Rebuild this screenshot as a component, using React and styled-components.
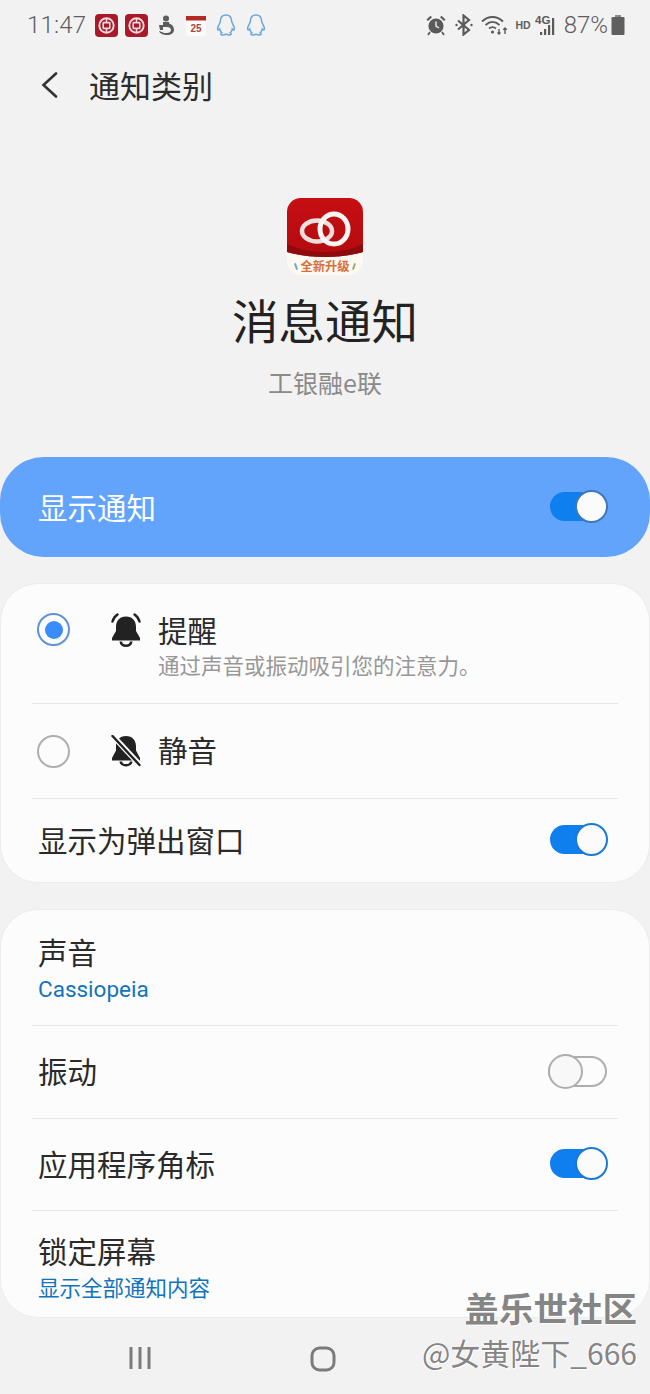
import React from "react";
import styled, { createGlobalStyle } from "styled-components";

const CJK = '"Noto Sans CJK SC", "Noto Sans", sans-serif';

const Global = createGlobalStyle`
  html, body { margin: 0; padding: 0; background: #f2f2f2; }
  * { box-sizing: border-box; }
`;

const Screen = styled.div`
  position: relative;
  width: 650px;
  height: 1394px;
  overflow: hidden;
  background: #f2f2f2;
  font-family: ${CJK};
  color: #252525;
  display: flex;
  flex-direction: column;
`;

const StatusBar = styled.div`
  height: 50px;
  padding: 0 25px 0 27px;
  display: flex;
  align-items: center;
  justify-content: space-between;
  color: #5e5e5e;
`;
const StatusGroup = styled.div`
  display: flex;
  align-items: center;
  gap: ${(p) => p.$gap || 6}px;
`;
const Clock = styled.span`
  font-family: Roboto, sans-serif;
  font-size: 24px;
  font-weight: 300;
  letter-spacing: 0.2px;
  margin-right: -1px;
`;
const Percent = styled.span`
  font-family: Roboto, sans-serif;
  font-size: 24px;
  font-weight: 300;
  margin-left: 0;
  margin-right: -4px;
`;
const HdLabel = styled.span`
  font-family: "Liberation Sans", sans-serif;
  font-size: 10.5px;
  font-weight: 700;
  margin-right: -3px;
`;

const Header = styled.header`
  height: 72px;
  padding: 0 0 2px 41px;
  display: flex;
  align-items: center;
  gap: 30px;
`;
const HeaderTitle = styled.h1`
  margin: 0 0 2px;
  font-size: 31px;
  font-weight: 400;
  line-height: 1;
  color: #2c2c2c;
`;

const Hero = styled.section`
  display: flex;
  flex-direction: column;
  align-items: center;
  padding-top: 76px;
  height: 335px;
`;
const AppIcon = styled.div`
  width: 76px;
  height: 77px;
  border-radius: 14px;
  overflow: hidden;
  background: #fdf8f2;
  display: flex;
  flex-direction: column;
  align-items: center;
`;
const AppIconArt = styled.svg`
  display: block;
  flex: none;
`;
const AppIconLabel = styled.span`
  font-size: 12.3px;
  line-height: 17px;
  font-weight: 700;
  color: #d8703a;
  white-space: nowrap;
  display: flex;
  align-items: center;
  gap: 3px;
  &::before,
  &::after {
    content: "";
    width: 2px;
    height: 7px;
    border-radius: 1px;
    background: #6fa8c9;
    transform: rotate(-20deg);
  }
  &::after {
    background: #8fb56a;
    transform: rotate(20deg);
  }
`;
const HeroTitle = styled.h2`
  margin: 14px 0 0;
  font-size: 46.5px;
  line-height: 60px;
  font-weight: 400;
  color: #222;
`;
const HeroSub = styled.div`
  margin-top: 17px;
  font-size: 25px;
  line-height: 32px;
  color: #8a8a8a;
`;

const Banner = styled.div`
  height: 100px;
  border-radius: 44px;
  background: #62a3fb;
  padding: 0 43px 0 38px;
  display: flex;
  align-items: center;
  justify-content: space-between;
  font-size: 29.5px;
  color: #fff;
  flex: none;
`;
const BannerText = styled.span`
  margin-bottom: 3px;
`;

const Card = styled.section`
  margin-top: 26px;
  background: #fcfcfc;
  border: 1px solid #ececec;
  border-radius: 38px;
  padding: 0 31px;
  flex: none;
`;
const Row = styled.div`
  height: ${(p) => p.$h}px;
  padding: ${(p) => p.$pt || 0}px 11px 0 6px;
  display: flex;
  align-items: center;
  justify-content: space-between;
  border-top: ${(p) => (p.$first ? "none" : "1px solid #e6e6e6")};
`;
const OptionRow = styled(Row)`
  justify-content: flex-start;
  align-items: ${(p) => (p.$top ? "flex-start" : "center")};
  padding-top: ${(p) => (p.$top ? "29px" : "0")};
  padding-left: 5px;
`;
const RowText = styled.div`
  display: flex;
  flex-direction: column;
`;
const OptionText = styled(RowText)`
  margin-top: -4px;
  margin-left: 1px;
`;
const Label = styled.div`
  font-size: 29.5px;
  line-height: 40px;
  color: #2a2a2a;
`;
const InlineLabel = styled(Label)`
  margin-bottom: 4px;
  margin-left: ${(p) => p.$indent || 0}px;
`;
const Hint = styled.div`
  font-size: 21.5px;
  line-height: 28px;
  color: #979797;
  margin-top: 2px;
  white-space: nowrap;
`;
const LinkValue = styled.div`
  font-family: ${(p) => (p.$latin ? "Roboto, sans-serif" : CJK)};
  font-size: ${(p) => (p.$latin ? 22.5 : 21.5)}px;
  line-height: 30px;
  color: #1273bd;
  margin-top: ${(p) => (p.$latin ? 3 : 2)}px;
`;
const Radio = styled.div`
  width: 33px;
  height: 33px;
  flex: none;
  border-radius: 50%;
  border: 2px solid ${(p) => (p.$on ? "#5f92da" : "#aeaeae")};
  display: flex;
  align-items: center;
  justify-content: center;
  &::after {
    content: "";
    display: ${(p) => (p.$on ? "block" : "none")};
    width: 18px;
    height: 18px;
    border-radius: 50%;
    background: #3a8bfb;
  }
`;
const BellSlot = styled.div`
  margin-left: 39px;
  margin-right: 14px;
  width: 34px;
  flex: none;
  display: flex;
  justify-content: center;
`;

const Track = styled.div`
  width: ${(p) => (p.$on ? 57 : 59)}px;
  height: ${(p) => (p.$on ? 29 : 31)}px;
  margin-bottom: 2px;
  border-radius: 16px;
  flex: none;
  display: flex;
  align-items: center;
  justify-content: ${(p) => (p.$on ? "flex-end" : "flex-start")};
  background: ${(p) => (p.$on ? "#0f7ff0" : "transparent")};
  border: ${(p) => (p.$on ? "none" : "2px solid #aeaeae")};
`;
const Thumb = styled.div`
  width: ${(p) => (p.$on ? 33 : 35)}px;
  height: ${(p) => (p.$on ? 33 : 35)}px;
  flex: none;
  border-radius: 50%;
  margin: ${(p) => (p.$on ? "0 -1px 0 0" : "0 0 0 -2px")};
  background: ${(p) => (p.$on ? "#fbfbfb" : "#f8f8f8")};
  border: 2px solid ${(p) => (p.$on ? (p.$dark ? "#3f78b8" : "#1a78d8") : "#aeaeae")};
`;

const NavBar = styled.nav`
  margin-top: 28px;
  padding-left: 128px;
  display: flex;
  align-items: flex-start;
  gap: 158px;
  color: #7b7b7b;
`;

const Watermark = styled.div`
  position: absolute;
  right: 13px;
  bottom: 20px;
  text-align: right;
  color: #858585;
  text-shadow: 1px 1px 0 #fff, -1px 0 0 #fff;
`;
const WatermarkBrand = styled.div`
  font-size: 34.5px;
  font-weight: 700;
  line-height: 44px;
`;
const WatermarkUser = styled.div`
  font-size: 30px;
  line-height: 44px;
  margin-top: 1px;
  white-space: nowrap;
`;

const BankBadge = () => (
  <svg width="23" height="23" viewBox="0 0 23 23">
    <rect width="23" height="23" rx="4" fill="#a9192a" />
    <circle cx="11.5" cy="11.5" r="7.2" fill="none" stroke="#f3dcdc" strokeWidth="1.9" />
    <rect x="8.2" y="8.6" width="6.6" height="5.8" rx="0.6" fill="none" stroke="#f3dcdc" strokeWidth="1.6" />
    <path d="M11.5 4.5v4M11.500 14.500v4" stroke="#f3dcdc" strokeWidth="1.5" />
  </svg>
);

const ChatPenguin = () => (
  <svg width="20" height="24" viewBox="0 0 20 24" fill="none" stroke="#6aa7dc" strokeWidth="1.5">
    <path d="M10 2c3.800 0 5.600 3 5.700 6.500 0 1.200 2 3.600 2.600 6.400.4 2-.6 2.700-2 1.200 0 1.700-1 2.800-2 3.500 1.500.6 1.200 2.400-1 2.400-1.500 0-2.500-.5-3.300-.9-.6.4-1.800.9-3.300.9-2.200 0-2.500-1.800-1-2.400-1-.7-2-1.800-2-3.500-1.400 1.500-2.400.8-2-1.200.6-2.800 2.600-5.200 2.600-6.400C4.400 5 6.200 2 10 2Z" />
  </svg>
);

const SailorGlyph = () => (
  <svg width="18" height="21" viewBox="0 0 18 21" fill="#5c5c5c">
    <circle cx="8" cy="3.500" r="3" />
    <path d="M5 7h6l1 5H5z" />
    <path d="M9 9c4-1 7 2 7 6 0 3-3 5-7 5-3 0-7-1-8-4l3 1c1 1 3 1 5 1s4-1 4-3c0-2-2-3-4-3z" />
    <path d="M1 10h4v5H2z" />
  </svg>
);

const CalendarGlyph = () => (
  <svg width="20" height="21" viewBox="0 0 20 21">
    <rect y="1" width="20" height="20" fill="#fafafa" />
    <rect y="1" width="20" height="4.500" fill="#b32a22" />
    <text x="10" y="16.500" textAnchor="middle" fontFamily="Liberation Sans, sans-serif" fontSize="10" fontWeight="700" fill="#a5483f">25</text>
  </svg>
);

const AlarmGlyph = () => (
  <svg width="22" height="22" viewBox="0 0 22 22" fill="#5a5a5a">
    <circle cx="11" cy="12" r="7.600" />
    <path d="M11 7.500V12l3 2" stroke="#e8e8e8" strokeWidth="1.500" fill="none" />
    <path d="M1.500 5.500 5.500 1.800l1.500 1.500-4 3.700zM20.500 5.500 16.500 1.800 15 3.300l4 3.700z" />
    <path d="M5 18l-2 3M17 18l2 3" stroke="#5a5a5a" strokeWidth="1.800" />
  </svg>
);

const BluetoothGlyph = () => (
  <svg width="20" height="22" viewBox="0 0 20 22" fill="none" stroke="#5a5a5a" strokeWidth="2.200">
    <path d="M4 6.500 15 16l-5.500 4.500V1.500L15 6 4 15.500" />
    <circle cx="2.500" cy="11" r="1.200" fill="#5a5a5a" stroke="none" />
    <circle cx="17.500" cy="11" r="1.200" fill="#5a5a5a" stroke="none" />
  </svg>
);

const WifiGlyph = () => (
  <svg width="27" height="22" viewBox="0 0 27 22" fill="none" stroke="#5a5a5a" strokeWidth="1.800">
    <path d="M1 7.500C7 1.500 16 1.500 22 7.500" />
    <path d="M4.500 11c4.500-4 9.500-4 14 0" />
    <path d="M8 14.500c2.500-2 4.500-2 7 0" />
    <circle cx="11.500" cy="18" r="1.600" fill="#5a5a5a" stroke="none" />
    <path d="M18 15v5M16.500 18.500 18 20l1.500-1.500M24 20v-6M22.300 15.800 24 14l1.700 1.800" strokeWidth="1.400" />
  </svg>
);

const SignalGlyph = () => (
  <svg width="22" height="24" viewBox="0 0 22 24" fill="#5a5a5a">
    <text x="0" y="10.500" fontFamily="Liberation Sans, sans-serif" fontSize="11.500" fontWeight="700">4G</text>
    <rect x="5" y="19" width="2.200" height="3" />
    <rect x="9" y="16" width="2.200" height="6" />
    <rect x="13" y="12" width="2.200" height="10" />
    <rect x="17" y="5" width="2.200" height="17" />
  </svg>
);

const BatteryGlyph = () => (
  <svg width="14" height="20" viewBox="0 0 14 20">
    <rect x="4" y="0" width="6" height="3" fill="#8a8a8a" />
    <rect x="0.500" y="2" width="13" height="18" rx="1.200" fill="#5f5f5f" />
  </svg>
);

const BackChevron = () => (
  <svg width="18" height="26" viewBox="0 0 18 26" fill="none" stroke="#333" strokeWidth="2.600" strokeLinecap="round">
    <path d="M15 1.500 2.500 13 15 24.500" />
  </svg>
);

const RingBell = () => (
  <svg width="30" height="34" viewBox="0 0 30 34" fill="#222">
    <path d="M15 3.500c-6.500 0-10 4.500-10 10.500v4L1 25v2.500h28V25l-4-7v-4c0-6-3.500-10.500-10-10.500Z" />
    <path d="M8.500 28.500a6.500 5.500 0 0 0 13 0h-2.600a3.900 3 0 0 1-7.800 0Z" />
    <path d="M1.500 8.500c.8-3 2.400-5.200 5-7M28.500 8.500c-.8-3-2.400-5.200-5-7" fill="none" stroke="#222" strokeWidth="2.400" strokeLinecap="round" />
  </svg>
);

const MutedBell = () => (
  <svg width="30" height="32" viewBox="0 0 30 32" fill="#222">
    <path d="M15 1c-6.500 0-10 4.500-10 10.500v4L1 23v2.500h28V23l-4-7.500v-4C25 5.500 21.500 1 15 1Z" />
    <path d="M8.500 26.500a6.500 5 0 0 0 13 0h-2.600a3.900 2.600 0 0 1-7.800 0Z" />
    <path d="M1 0 29 30" stroke="#fcfcfc" strokeWidth="5.500" />
    <path d="M1.500 1 28.500 30" stroke="#222" strokeWidth="2.400" strokeLinecap="round" />
  </svg>
);

const RecentsIcon = () => (
  <svg width="24" height="24" viewBox="0 0 24 24" fill="none" stroke="currentColor" strokeWidth="3">
    <path d="M3 1v22M12 1v22M21 1v22" />
  </svg>
);

const HomeIcon = () => (
  <svg width="26" height="26" viewBox="0 0 26 26" fill="none" stroke="currentColor" strokeWidth="3">
    <rect x="2" y="2" width="22" height="22" rx="7.500" />
  </svg>
);

const Switch = ({ on, dark }) => (
  <Track $on={on}>
    <Thumb $on={on} $dark={dark} />
  </Track>
);

export default function App() {
  return (
    <Screen>
      <Global />
      <StatusBar>
        <StatusGroup $gap={10}>
          <Clock>11:47</Clock>
          <StatusGroup $gap={7}>
            <BankBadge />
            <BankBadge />
          </StatusGroup>
          <SailorGlyph />
          <CalendarGlyph />
          <ChatPenguin />
          <ChatPenguin />
        </StatusGroup>
        <StatusGroup $gap={7}>
          <AlarmGlyph />
          <BluetoothGlyph />
          <WifiGlyph />
          <HdLabel>HD</HdLabel>
          <SignalGlyph />
          <Percent>87%</Percent>
          <BatteryGlyph />
        </StatusGroup>
      </StatusBar>

      <Header>
        <BackChevron />
        <HeaderTitle>通知类别</HeaderTitle>
      </Header>

      <Hero>
        <AppIcon>
          <AppIconArt width="76" height="60" viewBox="0 0 76 60">
            <defs>
              <linearGradient id="iconRed" x1="0" y1="0" x2="0" y2="1">
                <stop offset="0" stopColor="#c70e13" />
                <stop offset="1" stopColor="#b30b0f" />
              </linearGradient>
            </defs>
            <path d="M0 0h76v54c-10 3-24 5-38 5S10 57 0 54Z" fill="url(#iconRed)" />
            <path d="M0 46c10 5 24 8 38 8s28-3 38-8v8c-10 3-24 5-38 5S10 57 0 54Z" fill="#8f0a0d" />
            <ellipse cx="30" cy="33" rx="15" ry="10.500" fill="none" stroke="#eadfdc" strokeWidth="4.500" />
            <ellipse cx="47" cy="31" rx="14" ry="15" fill="none" stroke="#fbf6f3" strokeWidth="5" />
          </AppIconArt>
          <AppIconLabel>全新升级</AppIconLabel>
        </AppIcon>
        <HeroTitle>消息通知</HeroTitle>
        <HeroSub>工银融e联</HeroSub>
      </Hero>

      <Banner>
        <BannerText>显示通知</BannerText>
        <Switch on dark />
      </Banner>

      <Card>
        <OptionRow $first $h={119} $top>
          <Radio $on />
          <BellSlot>
            <RingBell />
          </BellSlot>
          <OptionText>
            <Label>提醒</Label>
            <Hint>通过声音或振动吸引您的注意力。</Hint>
          </OptionText>
        </OptionRow>
        <OptionRow $h={95}>
          <Radio />
          <BellSlot>
            <MutedBell />
          </BellSlot>
          <InlineLabel $indent={1}>静音</InlineLabel>
        </OptionRow>
        <Row $h={84}>
          <InlineLabel>显示为弹出窗口</InlineLabel>
          <Switch on />
        </Row>
      </Card>

      <Card>
        <Row $first $h={115}>
          <RowText>
            <Label>声音</Label>
            <LinkValue $latin>Cassiopeia</LinkValue>
          </RowText>
        </Row>
        <Row $h={93}>
          <InlineLabel>振动</InlineLabel>
          <Switch />
        </Row>
        <Row $h={92}>
          <InlineLabel>应用程序角标</InlineLabel>
          <Switch on />
        </Row>
        <Row $h={107} $pt={4}>
          <RowText>
            <Label>锁定屏幕</Label>
            <LinkValue>显示全部通知内容</LinkValue>
          </RowText>
        </Row>
      </Card>

      <NavBar>
        <RecentsIcon />
        <HomeIcon />
      </NavBar>

      <Watermark>
        <WatermarkBrand>盖乐世社区</WatermarkBrand>
        <WatermarkUser>@女黄陛下_666</WatermarkUser>
      </Watermark>
    </Screen>
  );
}
